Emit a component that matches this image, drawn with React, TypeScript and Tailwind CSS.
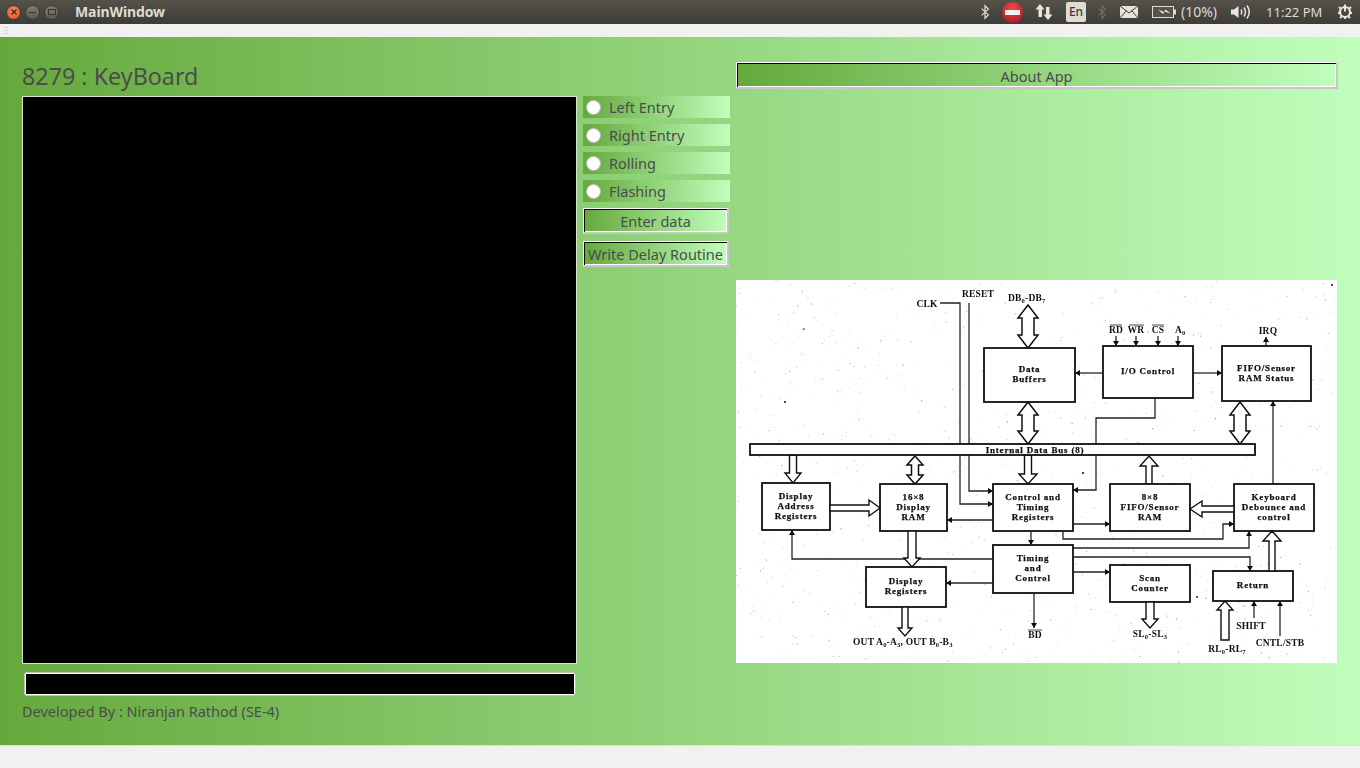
const UI_FONT = "font-['Noto_Sans',sans-serif]";
const GREEN = "bg-[linear-gradient(90deg,#65a93c,#c0ffbc)]";

function DoubleArrow({ x, y1, y2, hw = 10, sw = 6, hl = 13 }: { x: number; y1: number; y2: number; hw?: number; sw?: number; hl?: number }) {
  const pts = [
    [x, y1], [x + hw, y1 + hl], [x + sw, y1 + hl], [x + sw, y2 - hl], [x + hw, y2 - hl], [x, y2],
    [x - hw, y2 - hl], [x - sw, y2 - hl], [x - sw, y1 + hl], [x - hw, y1 + hl],
  ];
  return <polygon points={pts.map((p) => p.join(",")).join(" ")} fill="white" stroke="#111" strokeWidth="1.5" />;
}

// hollow arrow, vertical; tip at y2 (may point up or down)
function HollowV({ x, y1, y2, hw = 8, sw = 3.5, hl = 10 }: { x: number; y1: number; y2: number; hw?: number; sw?: number; hl?: number }) {
  const d = y2 > y1 ? 1 : -1;
  const yh = y2 - d * hl;
  return (
    <polygon
      points={`${x - sw},${y1} ${x - sw},${yh} ${x - hw},${yh} ${x},${y2} ${x + hw},${yh} ${x + sw},${yh} ${x + sw},${y1}`}
      fill="white"
      stroke="#111"
      strokeWidth="1.4"
    />
  );
}

function HollowH({ y, x1, x2, hw = 8, sw = 3, hl = 11 }: { y: number; x1: number; x2: number; hw?: number; sw?: number; hl?: number }) {
  const d = x2 > x1 ? 1 : -1;
  const xh = x2 - d * hl;
  return (
    <polygon
      points={`${x1},${y - sw} ${xh},${y - sw} ${xh},${y - hw} ${x2},${y} ${xh},${y + hw} ${xh},${y + sw} ${x1},${y + sw}`}
      fill="white"
      stroke="#111"
      strokeWidth="1.4"
    />
  );
}

// thin line ending in a small solid arrow head
function Wire({ points }: { points: number[][] }) {
  const n = points.length;
  const [ax, ay] = points[n - 1];
  const [bx, by] = points[n - 2];
  const dx = Math.sign(ax - bx);
  const dy = Math.sign(ay - by);
  const head = `${ax},${ay} ${ax - dx * 5 - dy * 3},${ay - dy * 5 - dx * 3} ${ax - dx * 5 + dy * 3},${ay - dy * 5 + dx * 3}`;
  return (
    <g>
      <polyline points={points.map((p) => p.join(",")).join(" ")} fill="none" stroke="#222" strokeWidth="1.3" />
      <polygon points={head} fill="#111" />
    </g>
  );
}

function Block({ x1, y1, x2, y2, lines }: { x1: number; y1: number; x2: number; y2: number; lines: string[] }) {
  const cx = (x1 + x2) / 2;
  const cy = (y1 + y2) / 2;
  const lh = 10;
  const top = cy - ((lines.length - 1) * lh) / 2 + 2;
  return (
    <g>
      <rect x={x1} y={y1} width={x2 - x1} height={y2 - y1} fill="white" stroke="#111" strokeWidth="1.8" />
      {lines.map((l, i) => (
        <text key={i} x={cx} y={top + i * lh} textAnchor="middle" fontSize="9" fontWeight="700" letterSpacing="0.8" fill="#111" stroke="#111" strokeWidth="0.25">
          {l}
        </text>
      ))}
    </g>
  );
}

function Label({ x, y, children, anchor = "middle" }: { x: number; y: number; children: React.ReactNode; anchor?: "middle" | "start" }) {
  return (
    <text x={x} y={y} textAnchor={anchor} fontSize="9.5" fontWeight="700" letterSpacing="0.2" fill="#111">
      {children}
    </text>
  );
}

function Sub({ children }: { children: React.ReactNode }) {
  return <tspan fontSize="6.500" dy="2">{children}</tspan>;
}

function Up({ children }: { children: React.ReactNode }) {
  return <tspan dy="-2">{children}</tspan>;
}

// scan noise of the printed page
function specks() {
  const out: { x: number; y: number; r: number; o: number }[] = [];
  let s = 8279;
  const rnd = () => {
    s = (s * 16807) % 2147483647;
    return s / 2147483647;
  };
  for (let i = 0; i < 1000; i++) {
    out.push({ x: 736 + rnd() * 601, y: 280 + rnd() * 383, r: 0.3 + rnd() * 0.4, o: 0.12 + rnd() * 0.4 });
  }
  return out;
}

function BlockDiagram() {
  return (
    <svg viewBox="736 280 601 383" className="block h-[383px] w-[601px] bg-white font-['Liberation_Serif',serif]">
      <filter id="scan">
        <feGaussianBlur stdDeviation="0.4" />
      </filter>
      <g filter="url(#scan)">
        {specks().map((d, i) => (
          <circle key={i} cx={d.x} cy={d.y} r={d.r} fill="#333" opacity={d.o} />
        ))}
        <circle cx="785" cy="402" r="1" fill="#111" />
        <circle cx="804" cy="329" r="0.8" fill="#111" />
        <circle cx="1083" cy="473" r="1.1" fill="#111" />
        <circle cx="1332" cy="285" r="1" fill="#111" />
        <circle cx="1197" cy="597" r="0.9" fill="#111" />

        <Label x={927} y={307}>CLK</Label>
        <Label x={978} y={297}>RESET</Label>
        <Label x={1008} y={301} anchor="start">DB<Sub>0</Sub><Up>-DB</Up><Sub>7</Sub></Label>

        <polyline points="940,303 960,303 960,444" fill="none" stroke="#222" strokeWidth="1.3" />
        <line x1="969" y1="303" x2="969" y2="444" stroke="#222" strokeWidth="1.3" />
        <Wire points={[[960, 455], [960, 504], [993, 504]]} />
        <Wire points={[[969, 455], [969, 491], [993, 491]]} />
        <polyline points="1155,398 1155,418 1096,418 1096,444" fill="none" stroke="#222" strokeWidth="1.3" />
        <Wire points={[[1096, 455], [1096, 490], [1073, 490]]} />

        <DoubleArrow x={1028} y1={305} y2={348} />
        <DoubleArrow x={1028} y1={402} y2={444} />
        <DoubleArrow x={1240} y1={402} y2={444} />
        <DoubleArrow x={915} y1={456} y2={484} hw={8} sw={3.5} hl={9} />
        <HollowV x={793} y1={455} y2={483} />
        <HollowV x={1028} y1={455} y2={484} hw={9} />
        <HollowV x={1149} y1={484} y2={456} hw={9} sw={3} />

        <Wire points={[[1103, 373], [1075, 373]]} />
        <Wire points={[[1193, 373], [1222, 373]]} />
        <Wire points={[[1273, 484], [1273, 401]]} />
        {[1116, 1136, 1158, 1178].map((x) => (
          <Wire key={x} points={[[x, 336], [x, 346]]} />
        ))}
        <Wire points={[[1266, 346], [1266, 337]]} />
        <Label x={1116} y={333}>RD</Label>
        <Label x={1136} y={333}>WR</Label>
        <Label x={1158} y={333}>CS</Label>
        {[[1110, 1122], [1129, 1144], [1152, 1164]].map(([a, b]) => (
          <line key={a} x1={a} y1={325} x2={b} y2={325} stroke="#111" strokeWidth="0.8" />
        ))}
        <Label x={1175} y={333} anchor="start">A<Sub>0</Sub></Label>
        <Label x={1268} y={334}>IRQ</Label>

        <Block x1={984} y1={348} x2={1075} y2={402} lines={["Data", "Buffers"]} />
        <Block x1={1103} y1={346} x2={1193} y2={398} lines={["I/O Control"]} />
        <Block x1={1222} y1={346} x2={1311} y2={401} lines={["FIFO/Sensor", "RAM Status"]} />
        <Block x1={750} y1={444} x2={1255} y2={455} lines={[""]} />
        <text x={1035} y={453} textAnchor="middle" fontSize="9" fontWeight="700" letterSpacing="0.8" fill="#111" stroke="#111" strokeWidth="0.25">Internal Data Bus (8)</text>

        <Block x1={762} y1={483} x2={830} y2={530} lines={["Display", "Address", "Registers"]} />
        <Block x1={880} y1={484} x2={947} y2={531} lines={["16×8", "Display", "RAM"]} />
        <Block x1={993} y1={484} x2={1073} y2={531} lines={["Control and", "Timing", "Registers"]} />
        <Block x1={1110} y1={484} x2={1190} y2={531} lines={["8×8", "FIFO/Sensor", "RAM"]} />
        <Block x1={1234} y1={484} x2={1314} y2={531} lines={["Keyboard", "Debounce and", "control"]} />
        <Block x1={993} y1={545} x2={1073} y2={593} lines={["Timing", "and", "Control"]} />
        <Block x1={866} y1={567} x2={946} y2={607} lines={["Display", "Registers"]} />
        <Block x1={1110} y1={565} x2={1190} y2={602} lines={["Scan", "Counter"]} />
        <Block x1={1213} y1={571} x2={1293} y2={601} lines={["Return"]} />

        <HollowH y={508} x1={830} x2={880} />
        <Wire points={[[993, 520], [947, 520]]} />
        <Wire points={[[993, 559], [792, 559], [792, 530]]} />
        <HollowV x={912} y1={531} y2={567} hw={8} sw={4} hl={9} />
        <Wire points={[[1031, 531], [1031, 545]]} />
        <Wire points={[[993, 583], [946, 583]]} />
        <HollowV x={905} y1={607} y2={636} hw={7} sw={3} hl={8} />
        <Label x={853} y={645} anchor="start">OUT A<Sub>0</Sub><Up>-A</Up><Sub>3</Sub><Up>, OUT B</Up><Sub>0</Sub><Up>-B</Up><Sub>3</Sub></Label>
        <Wire points={[[1034, 593], [1034, 628]]} />
        <Label x={1035} y={638}>BD</Label>
        <line x1="1028" y1="630" x2="1042" y2="630" stroke="#111" strokeWidth="0.8" />

        <Wire points={[[1073, 524], [1110, 524]]} />
        <Wire points={[[1063, 531], [1063, 539], [1223, 539], [1223, 524], [1234, 524]]} />
        <Wire points={[[1073, 548], [1249, 548], [1249, 531]]} />
        <Wire points={[[1073, 557], [1250, 557], [1250, 571]]} />
        <Wire points={[[1073, 572], [1110, 572]]} />
        <HollowH y={509} x1={1234} x2={1190} hl={12} />
        <HollowV x={1272} y1={571} y2={531} hw={9} sw={3} hl={10} />
        <HollowV x={1150} y1={602} y2={628} hw={8} sw={4} hl={9} />
        <Label x={1150} y={637}>SL<Sub>0</Sub><Up>-SL</Up><Sub>3</Sub></Label>
        <HollowV x={1225} y1={640} y2={601} hw={8} sw={4} hl={9} />
        <Label x={1227} y={652}>RL<Sub>0</Sub><Up>-RL</Up><Sub>7</Sub></Label>
        <Wire points={[[1254, 618], [1254, 601]]} />
        <Label x={1251} y={629}>SHIFT</Label>
        <Wire points={[[1280, 636], [1280, 601]]} />
        <Label x={1280} y={646}>CNTL/STB</Label>
      </g>
    </svg>
  );
}

function WindowDot({ color, glyph }: { color: string; glyph: React.ReactNode }) {
  return (
    <div className={`flex h-[15px] w-[15px] items-center justify-center rounded-full border border-[#3a3934] ${color}`}>
      {glyph}
    </div>
  );
}

function BluetoothIcon({ className }: { className: string }) {
  return (
    <svg viewBox="0 0 12 18" className={className} fill="none" stroke="currentColor" strokeWidth="1.5">
      <path d="M2 5l8 7.5L6 16.5V1.5l4 4L2 13" />
    </svg>
  );
}

function TopPanel() {
  return (
    <div className="flex h-6 items-center bg-[linear-gradient(180deg,#55524a,#3d3c37)] font-['Noto_Sans',sans-serif] text-[#dfdbd2]">
      <div className="ml-[6px] flex items-center gap-[4px]">
        <WindowDot
          color="bg-[radial-gradient(circle_at_50%_35%,#f58a5e,#e2501f)]"
          glyph={<svg viewBox="0 0 8 8" className="h-2 w-2" stroke="#4a2412" strokeWidth="1.3"><path d="M1.5 1.5l5 5M6.5 1.5l-5 5" /></svg>}
        />
        <WindowDot
          color="bg-[linear-gradient(180deg,#7b7a73,#5c5b55)]"
          glyph={<div className="h-px w-[7px] bg-[#35342f]" />}
        />
        <WindowDot
          color="bg-[linear-gradient(180deg,#7b7a73,#5c5b55)]"
          glyph={<div className="h-[6px] w-2 border border-[#35342f]" />}
        />
      </div>
      <span className="ml-[16px] w-[100px] text-[14px] font-bold leading-none tracking-[-0.1px]">MainWindow</span>

      <BluetoothIcon className="ml-[805px] h-[16px] w-[10px] text-[#dcdad5]" />
      <div className="ml-[12px] flex h-[21px] w-[21px] items-center justify-center rounded-full bg-[radial-gradient(circle_at_50%_30%,#ef4a4a,#a51220)]">
        <div className="h-[5px] w-[15px] bg-[#f5efef]" />
      </div>
      <svg viewBox="0 0 18 18" className="ml-[12px] h-[18px] w-[18px]" fill="#e8e6e1">
        <path d="M5 1l4.5 5.5H7V14H3.500V6.500H.5zM13 17l-4.500-5.500H11V4h3.500v7.500h3z" />
      </svg>
      <div className="ml-[13px] flex h-5 w-5 items-center justify-center rounded-[2px] bg-[#dfdbd2] text-[12px] font-medium leading-none text-[#3c3b37]">En</div>
      <BluetoothIcon className="ml-[11px] h-[16px] w-[10px] text-[#6f6d67]" />
      <svg viewBox="0 0 18 12" className="ml-[13px] h-[12px] w-[18px]">
        <rect width="18" height="12" fill="#e6e3dd" />
        <path d="M0 0l9 7 9-7M0 12l6.500-7.500M18 12l-6.500-7.500" fill="none" stroke="#3c3b37" strokeWidth="1" />
      </svg>
      <svg viewBox="0 0 24 12" className="ml-[14px] h-[12px] w-[24px]">
        <rect x=".5" y=".5" width="21" height="11" fill="#55534d" stroke="#dfdbd2" />
        <rect x="22" y="3.500" width="2" height="5" fill="#dfdbd2" />
        <path d="M6 3.500l6 2.500 1.500-2.500 5 4-6-2-1.500 2.500z" fill="#efece6" />
      </svg>
      <span className="ml-[5px] text-[14px] leading-none">(10%)</span>
      <svg viewBox="0 0 20 16" className="ml-[14px] h-[16px] w-[20px]" fill="none" stroke="#e8e6e1" strokeWidth="1.500">
        <path d="M0 5.500h3L7.500 2v12L3 10.500H0z" fill="#e8e6e1" stroke="none" />
        <path d="M10 5.500q1.500 2.500 0 5M13 3.500q3 4.500 0 9M16 1.500q4.500 6.500 0 13" />
      </svg>
      <span className="ml-[15px] text-[13px] leading-none">11:22 PM</span>
      <svg viewBox="0 0 16 16" className="ml-[15px] h-4 w-4" fill="none" stroke="#e8e6e1">
        <circle cx="8" cy="8" r="5" strokeWidth="2.200" />
        <path d="M8 .5v7" strokeWidth="2" />
        <path d="M8 1v2M2 3l1.500 1.500M14 3l-1.500 1.500M1 9h2M13 9h2M3 14l1.500-1.500M13 14l-1.500-1.500M8 13v2" strokeWidth="2" />
      </svg>
    </div>
  );
}

function RadioRow({ label }: { label: string }) {
  return (
    <div className={`flex h-[22px] items-center ${GREEN}`}>
      <div className="ml-[3px] h-[15px] w-[15px] rounded-full border border-[#bdbdb8] bg-white" />
      <span className="ml-[8px] text-[14.500px] leading-none text-[#4c4c4c]">{label}</span>
    </div>
  );
}

function BevelButton({ label, className }: { label: string; className: string }) {
  return (
    <div className={`flex items-center justify-center whitespace-nowrap border border-b-[2px] border-r-[2px] border-b-[#c9c6c6] border-l-white border-r-[#c9c6c6] border-t-white pt-[2px] text-[14.500px] leading-none text-[#4c4c4c] shadow-[inset_1px_1px_0_#000,inset_-1px_-1px_0_#fff] ${GREEN} ${className}`}>
      {label}
    </div>
  );
}

export default function App() {
  return (
    <div className={`flex h-[768px] w-[1360px] flex-col overflow-hidden bg-[#f2f1f0] ${UI_FONT}`}>
      <TopPanel />

      {/* toolbar strip with grip */}
      <div className="flex h-[13px] items-center pl-[4px]">
        <div className="flex flex-col gap-[2px]">
          <div className="h-px w-1 bg-[#d5d3cf]" />
          <div className="h-px w-1 bg-[#d5d3cf]" />
          <div className="h-px w-1 bg-[#d5d3cf]" />
        </div>
      </div>

      <div className={`flex h-[709px] border-b border-[#dcdcd8] pl-[22px] ${GREEN}`}>
        {/* keyboard display */}
        <div className="w-[555px]">
          <h1 className="flex h-[59px] items-end pb-[4px] text-[23.300px] font-normal leading-[32px] text-[#4c4c4c]">8279 : KeyBoard</h1>
          <div className="h-[568px] border border-[#d9e6cf] bg-black" />
          <div className="ml-[2px] mr-[1px] mt-[8px] h-[24px] rounded-[2px] border border-[#b9c9ad] bg-black shadow-[inset_0_0_0_1px_#fff]" />
          <p className="mt-[5px] text-[14.500px] leading-[20px] text-[#4c4c4c]">Developed By : Niranjan Rathod (SE-4)</p>
        </div>

        {/* entry mode options */}
        <div className="ml-[6px] flex w-[147px] flex-col gap-[6px] pt-[59px]">
          <RadioRow label="Left Entry" />
          <RadioRow label="Right Entry" />
          <RadioRow label="Rolling" />
          <RadioRow label="Flashing" />
          <BevelButton label="Enter data" className="h-[26px] w-[146px]" />
          <BevelButton label="Write Delay Routine" className="mt-[1px] h-[26px] w-[146px]" />
        </div>

        {/* about + diagram */}
        <div className="ml-[6px] w-[602px] pt-[25px]">
          <BevelButton label="About App" className="h-[27px] w-[602px]" />
          <div className="mt-[191px]">
            <BlockDiagram />
          </div>
        </div>
      </div>
    </div>
  );
}
